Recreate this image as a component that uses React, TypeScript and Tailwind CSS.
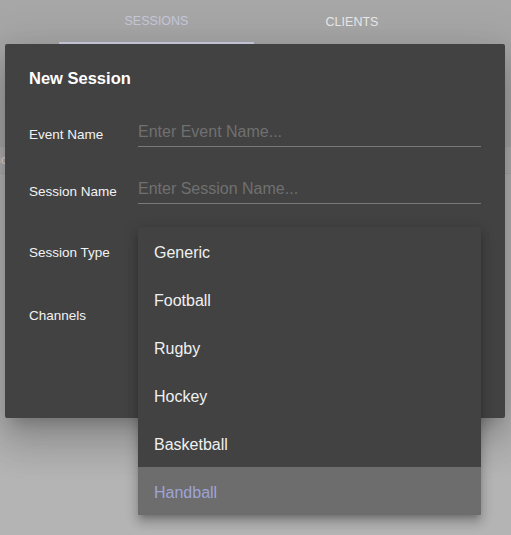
import React from "react";

const sessionTypes = ["Generic", "Football", "Rugby", "Hockey", "Basketball", "Handball"];
const selected = "Handball";

function Field({ label, placeholder }: { label: string; placeholder: string }) {
  return (
    <div className="flex items-center h-[32px]">
      <label className="w-[109px] shrink-0 pt-[9px] text-[13.5px] text-[#f2f2f2]">{label}</label>
      <input
        type="text"
        placeholder={placeholder}
        className="flex-1 h-[32px] pt-[2px] bg-transparent border-b border-[#7a7a7a] text-[16px] text-[#eeeeee] placeholder-[#707070] outline-none"
      />
    </div>
  );
}

function SelectRow({ label }: { label: string }) {
  return (
    <div className="flex items-center h-[32px]">
      <label className="w-[109px] shrink-0 pt-[9px] text-[13.5px] text-[#f2f2f2]">{label}</label>
      <div className="flex-1 h-[32px] border-b border-[#7a7a7a]" />
    </div>
  );
}

export default function App() {
  return (
    <div
      className="relative w-[511px] h-[535px] overflow-hidden bg-[#b4b4b4]"
      style={{ fontFamily: '"Liberation Sans", Arial, sans-serif' }}
    >
      {/* Page behind the dialog (dimmed) */}
      <div className="h-[147px] bg-[#a7a7a7]">
        <div className="flex pl-[59px] h-[44px]">
          <div className="w-[195px] flex items-center justify-center border-b-2 border-[#d0d1e6] text-[12.5px] text-[#c6c9dd]">
            SESSIONS
          </div>
          <div className="w-[196px] flex items-center justify-center text-[12.5px] text-[#eaeaea]">
            CLIENTS
          </div>
        </div>
      </div>
      <div className="h-[27px] bg-[#afafaf] border-b border-[#a9a9a9] flex items-center text-[13px] text-[#dcdcdc] -ml-[2px]">
        ic
      </div>

      {/* Dialog */}
      <div className="absolute left-[5px] top-[44px] w-[500px] h-[374px] bg-[#424242] rounded-[2px] shadow-[0_11px_15px_-7px_rgba(0,0,0,0.2),0_24px_38px_3px_rgba(0,0,0,0.14),0_9px_46px_8px_rgba(0,0,0,0.12)] px-[24px] pt-[24px]">
        <h2 className="text-[16.5px] leading-[20px] font-bold text-white">New Session</h2>
        <div className="mt-[27px] flex flex-col">
          <Field label="Event Name" placeholder="Enter Event Name..." />
          <div className="mt-[25px]">
            <Field label="Session Name" placeholder="Enter Session Name..." />
          </div>
          <div className="mt-[29px]">
            <SelectRow label="Session Type" />
          </div>
          <div className="mt-[31px]">
            <SelectRow label="Channels" />
          </div>
        </div>
      </div>

      {/* Open select menu */}
      <ul className="absolute left-[138px] top-[227px] w-[343px] bg-[#424242] rounded-[2px] shadow-[0_5px_5px_-3px_rgba(0,0,0,0.2),0_8px_10px_1px_rgba(0,0,0,0.14),0_3px_14px_2px_rgba(0,0,0,0.12)] overflow-hidden">
        {sessionTypes.map((t) => (
          <li
            key={t}
            className={
              t === selected
                ? "h-[48px] flex items-center pl-[16px] pt-[3px] text-[16px] bg-[#6d6d6d] text-[#9ea4d6]"
                : "h-[48px] flex items-center pl-[16px] pt-[3px] text-[16px] text-[#f0f0f0]"
            }
          >
            {t}
          </li>
        ))}
      </ul>
    </div>
  );
}
